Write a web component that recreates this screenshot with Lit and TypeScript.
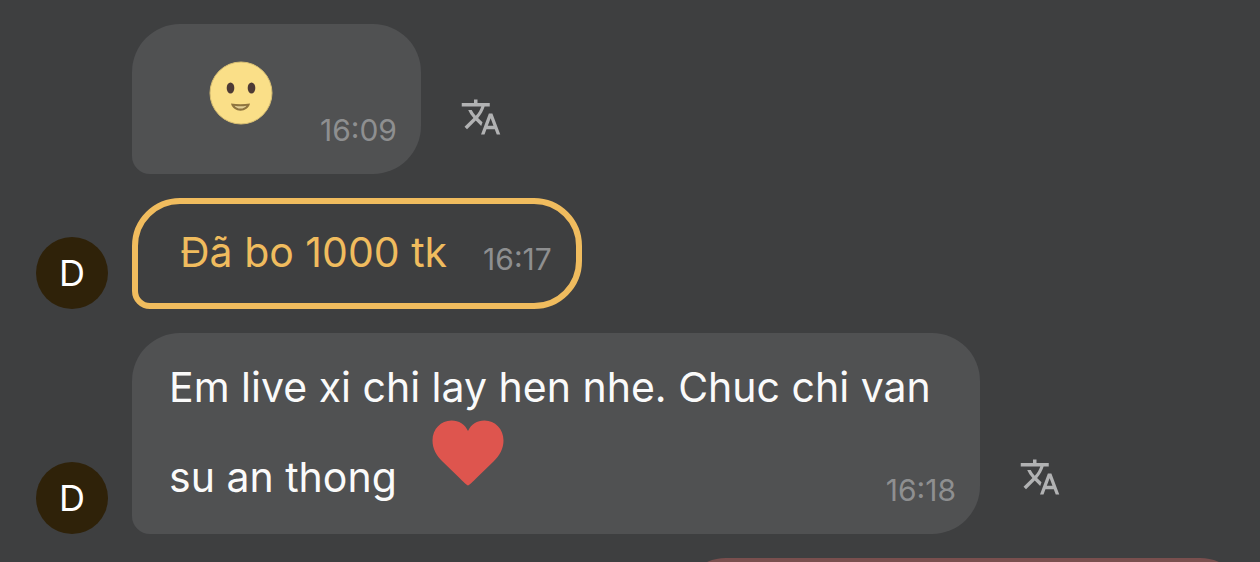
import { LitElement, html, css, svg, nothing } from "lit";
import { customElement, property } from "lit/decorators.js";

@customElement("chat-message")
class ChatMessage extends LitElement {
  @property() initial = "";
  @property() time = "";
  @property() kind: "text" | "tip" | "emoji" = "text";
  @property({ type: Boolean }) translatable = false;

  static styles = css`
    :host {
      display: flex;
      align-items: flex-end;
      gap: 24px;
      padding-right: 148px;
    }
    .avatar {
      flex: none;
      width: 72px;
      height: 72px;
      border-radius: 50%;
      display: flex;
      align-items: center;
      justify-content: center;
      font-size: 36px;
      line-height: 48px;
      color: #fff;
    }
    .filled {
      background: #2f2209;
    }
    .bubble {
      display: grid;
      min-width: 0;
      box-sizing: border-box;
      border-radius: 48px 48px 48px 18px;
      background: #505152;
      color: #fafafa;
      font-size: 41px;
    }
    .text {
      display: block;
      padding: 9px 36px 12px 37px;
      line-height: 90px;
    }
    .text .body {
      display: inline;
    }
    .tip {
      grid-template-columns: auto auto;
      column-gap: 36px;
      padding: 18px 24px 21px 42px;
      border: 6px solid #f0bc5e;
      background: transparent;
      color: #f0bc5e;
      line-height: 60px;
    }
    .emoji {
      grid-template-columns: auto auto;
      column-gap: 47px;
      padding: 37px 24px 26px 77px;
    }
    time {
      align-self: end;
      justify-self: end;
      font-size: 30px;
      line-height: 36px;
      color: #8e8f90;
    }
    .text time {
      float: right;
      margin: 40px -12px 0 0;
    }
    .tip time {
      margin-bottom: 5px;
    }
    button {
      flex: none;
      display: flex;
      margin: 0;
      padding: 0 15px 36px;
      border: 0;
      background: none;
      color: #b1b2b3;
      cursor: pointer;
    }
    .icon {
      width: 42px;
      height: 42px;
      fill: currentColor;
    }
  `;

  render() {
    return html`
      <div class="avatar ${this.initial ? "filled" : ""}">${this.initial}</div>
      <div class="bubble ${this.kind}">
        <div class="body"><slot></slot></div>
        <time>${this.time}</time>
      </div>
      ${this.translatable
        ? html`<button type="button" aria-label="Translate">
            <svg class="icon" viewBox="0 0 24 24" aria-hidden="true">
              <path
                d="M12.87 15.07l-2.54-2.51.03-.03c1.74-1.94 2.98-4.17 3.71-6.53H17V4h-7V2H8v2H1v1.99h11.17C11.5 7.92 10.44 9.75 9 11.35 8.07 10.32 7.3 9.19 6.69 8h-2c.73 1.63 1.73 3.17 2.98 4.56l-5.09 5.02L4 19l5-5 3.11 3.11.76-2.04zM18.5 10h-2L12 22h2l1.12-3h4.75L21 22h2l-4.5-12zm-2.62 7l1.62-4.33L19.12 17h-3.24z"
              />
            </svg>
          </button>`
        : nothing}
    `;
  }
}

const smile = svg`
  <circle cx="32" cy="32" r="31" fill="#fadf88" stroke="#d6bd72" stroke-width="1" />
  <ellipse cx="21.5" cy="27" rx="3.8" ry="5.6" fill="#4d3a35" />
  <ellipse cx="42.5" cy="27" rx="3.8" ry="5.6" fill="#4d3a35" />
  <path d="M22 42.500C28 43.500 35 43.500 41 42.500C39 52 24 52 22 42.500Z" fill="#8f753f" />
  <path d="M25.500 44.800Q31.500 45.800 37.500 44.800Q35.500 47.600 31.500 47.600Q27.500 47.600 25.500 44.800Z" fill="#e3cf95" />`;

@customElement("app-root")
class AppRoot extends LitElement {
  static styles = css`
    :host {
      display: block;
      height: 100vh;
      overflow: hidden;
      background: #3e3f40;
      font-family: Inter, "Liberation Sans", sans-serif;
    }
    .thread {
      display: flex;
      flex-direction: column;
      gap: 24px;
      padding: 24px 36px;
    }
    .smile {
      display: block;
      width: 64px;
      height: 64px;
      margin-bottom: 23px;
    }
    .heart {
      width: 72px;
      height: 66px;
      margin: -24px 24px 0;
      vertical-align: 6px;
    }
    .own {
      align-self: flex-end;
      width: 48%;
      height: 111px;
      margin-right: -24px;
      border-radius: 48px 48px 18px 48px;
      background: #794f4e;
    }
  `;

  render() {
    return html`
      <main class="thread">
        <chat-message kind="emoji" time="16:09" translatable>
          <svg class="smile" viewBox="0 0 64 64" role="img" aria-label="🙂">${smile}</svg>
        </chat-message>
        <chat-message kind="tip" initial="D" time="16:17">Đã bo 1000 tk</chat-message>
        <chat-message initial="D" time="16:18" translatable
          >Em live xi chi lay hen nhe. Chuc chi van su an thong
          <svg class="heart" viewBox="0 0 72 66" role="img" aria-label="❤">
            <path
              d="M36 65.500C35 65.500 31 61.500 27 57.500L10.500 41.500C4.500 35.500 0.500 29 0.500 20.500C0.500 9 9 0.500 19.500 0.500C27 0.500 33 4.500 36 11C39 4.500 45 0.500 52.500 0.500C63 0.500 71.500 9 71.500 20.500C71.500 29 67.500 35.500 61.500 41.500L45 57.500C41 61.500 37 65.500 36 65.500Z"
              fill="#de554e"
            />
          </svg>
        </chat-message>
        <div class="own"></div>
      </main>
    `;
  }
}
